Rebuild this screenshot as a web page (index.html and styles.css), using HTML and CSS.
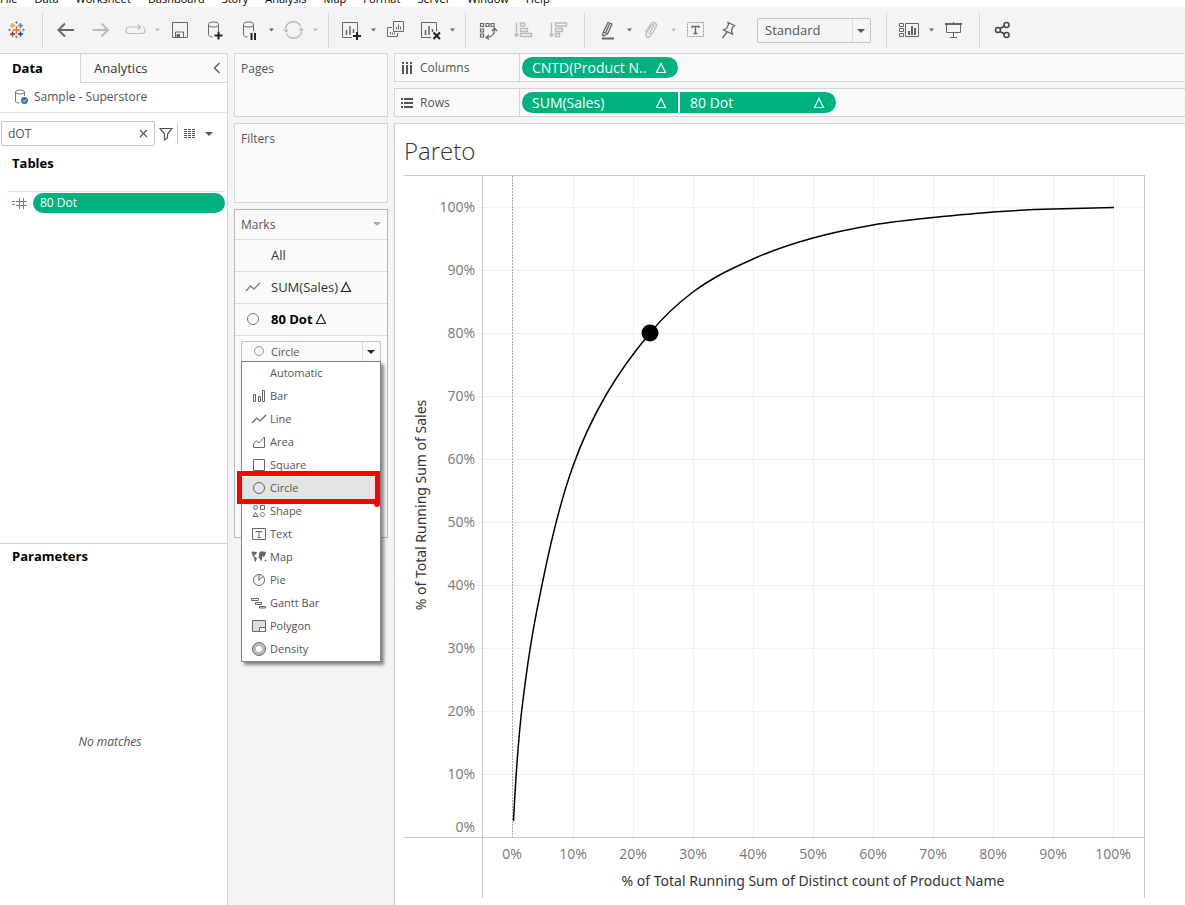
FILE: index.html
```html
<!DOCTYPE html>
<html lang="en">
<head>
    <meta charset="UTF-8">
    <meta name="viewport" content="width=device-width, initial-scale=1.0">
    <title>Pareto</title>
    <link rel="stylesheet" href="styles.css">
</head>
<body>
    <!-- Shared symbols -->
    <svg class="defs" aria-hidden="true">
        <symbol id="caret" viewBox="0 0 9 26"><path d="M2 11.500h5l-2.500 3z" fill="currentColor"/></symbol>
        <symbol id="delta" viewBox="0 0 12 12"><path d="M6 1.500 10.500 10.500H1.500z" fill="none" stroke="currentColor" stroke-width="1.200"/></symbol>
        <symbol id="circle" viewBox="0 0 16 16"><circle cx="8" cy="8" r="5.500" fill="none" stroke="currentColor"/></symbol>
        <symbol id="line" viewBox="0 0 16 16"><path d="M1 12 5.500 7 9 10 15 4" fill="none" stroke="currentColor" stroke-width="1.200"/></symbol>
    </svg>

    <!-- Menu bar -->
    <nav class="menubar">
        <a href="#">File</a>
        <a href="#">Data</a>
        <a href="#">Worksheet</a>
        <a href="#">Dashboard</a>
        <a href="#">Story</a>
        <a href="#">Analysis</a>
        <a href="#">Map</a>
        <a href="#">Format</a>
        <a href="#">Server</a>
        <a href="#">Window</a>
        <a href="#">Help</a>
    </nav>

    <!-- Toolbar -->
    <header class="toolbar">
        <button class="logo" aria-label="Start page">
            <svg viewBox="0 0 25 26" fill="none" stroke-width="1.500">
                <path d="M12.500 9v8M8.500 13h8" stroke="#e8762d"/>
                <path d="M8.500 6v5M6 8.500h5" stroke="#e9a23b"/>
                <path d="M16.500 6v5M14 8.500h5" stroke="#5b879b"/>
                <path d="M8.500 14.500v5M6 17h5" stroke="#c72035"/>
                <path d="M16.500 14.500v5M14 17h5" stroke="#1f447e"/>
                <path d="M12.500 4v3M11 5.500h3M12.500 18.500v3M11 20h3M5.500 11.500v3M4 13h3M19.500 11.500v3M18 13h3" stroke="#7b94ad" stroke-width="1"/>
            </svg>
        </button>
        <span class="sep"></span>
        <button class="tool" aria-label="Undo"><svg viewBox="0 0 25 26"><path d="M21 13H6M12 6.500 5.500 13l6.500 6.500" stroke-width="2"/></svg></button>
        <button class="tool off" aria-label="Redo"><svg viewBox="0 0 25 26"><path d="M4.500 13h15M13.500 6.500 20 13l-6.500 6.500" stroke-width="2"/></svg></button>
        <button class="tool off" aria-label="Replay"><svg viewBox="0 0 25 26"><path d="M17 10H6a3 3 0 0 0-3 3v.500a3 3 0 0 0 3 3h13a3 3 0 0 0 3-3V13a3 3 0 0 0-2-2.800M15 7.500l2.500 2.500-2.500 2.500" stroke-width="1.200"/></svg></button>
        <button class="caret off" aria-label="Replay options"><svg viewBox="0 0 9 26"><use href="#caret"/></svg></button>
        <button class="tool" aria-label="Save"><svg viewBox="0 0 25 26"><path d="M5.500 5.500h15v15h-15zM8.500 20v-5h8v5" /><path d="M9.500 17h3.500v3.500H9.500z" fill="currentColor" stroke="none"/></svg></button>
        <button class="tool" aria-label="New data source"><svg viewBox="0 0 25 26"><path d="M6.500 7.500v10c0 1.500 1.500 2.500 4 2.500M16.500 7.500V14"/><ellipse cx="11.500" cy="7.500" rx="5" ry="2.500"/><path d="M16.500 14.500v8M12.500 18.500h8" stroke="#222" stroke-width="2"/></svg></button>
        <button class="tool" aria-label="Pause updates"><svg viewBox="0 0 25 26"><path d="M6.500 7.500v10c0 1.500 1.500 2.500 4 2.500M16.500 7.500V14"/><ellipse cx="11.500" cy="7.500" rx="5" ry="2.500"/><path d="M14.500 16v7M18 16v7" stroke="#222" stroke-width="2"/></svg></button>
        <button class="caret" aria-label="Pause options"><svg viewBox="0 0 9 26"><use href="#caret"/></svg></button>
        <button class="tool off" aria-label="Refresh"><svg viewBox="0 0 25 26"><path d="M4.500 12a8 8 0 0 1 15-3M20.500 13.500a8 8 0 0 1-15 3.500" stroke-width="1.500"/><path d="M2 12.500h5l-1 3.500zM23 13.500h-5l2-3.500z" fill="currentColor" stroke="none"/></svg></button>
        <button class="caret off" aria-label="Refresh options"><svg viewBox="0 0 9 26"><use href="#caret"/></svg></button>
        <span class="sep"></span>
        <button class="tool" aria-label="New worksheet"><svg viewBox="0 0 25 26"><path d="M13 20.500H3.500v-15h15V15"/><path d="M7.500 13v5M11 9v9M14.500 12v4" stroke-width="1.500"/><path d="M18 15v8M14 19h8" stroke="#222" stroke-width="2"/></svg></button>
        <button class="caret" aria-label="New worksheet options"><svg viewBox="0 0 9 26"><use href="#caret"/></svg></button>
        <button class="tool" aria-label="Duplicate"><svg viewBox="0 0 25 26"><path d="M10.500 4.500h10v10h-10zM9 10.500H4.500v9h10V16M13.500 10v2.500M15.500 7.500v5M17.500 9.500v3M7.500 15v2.500M9.500 15.500v2M11.500 15.500v2"/></svg></button>
        <button class="tool" aria-label="Clear sheet"><svg viewBox="0 0 25 26"><path d="M13 20.500H3.500v-15h15V14"/><path d="M7.500 13v5M11 9v9M14.500 12v3" stroke-width="1.500"/><path d="m15.500 15.500 6.500 6.500M22 15.500 15.500 22" stroke="#222" stroke-width="2"/></svg></button>
        <button class="caret" aria-label="Clear options"><svg viewBox="0 0 9 26"><use href="#caret"/></svg></button>
        <span class="sep"></span>
        <button class="tool" aria-label="Swap rows and columns"><svg viewBox="0 0 25 26"><path d="M4.500 6.500h3v3h-3zM10 6.500h3v3h-3zM15 6.500h3v3h-3zM4.500 12h3v3h-3zM4.500 17h3v3h-3zM18.500 12c0 5-2 8-7.500 8.500M16 14l2.500-3 2.500 3M13 18l-3 2.500 3 2" stroke-width="1.200"/></svg></button>
        <button class="tool off" aria-label="Sort ascending"><svg viewBox="0 0 25 26"><path d="M5.500 5.500v14M3.500 17l2 2.500 2-2.500M9.500 6h4v3h-4zM9.500 11.500h7v3h-7zM9.500 16.500h11v3h-11z" stroke-width="1.400"/></svg></button>
        <button class="tool off" aria-label="Sort descending"><svg viewBox="0 0 25 26"><path d="M5.500 5.500v14M3.500 17l2 2.500 2-2.500M9.500 6h11v3h-11zM9.500 11.500h7v3h-7zM9.500 16.500h4v3h-4z" stroke-width="1.400"/></svg></button>
        <span class="sep"></span>
        <button class="tool" aria-label="Highlight"><svg viewBox="0 0 25 26"><path d="m13 5.500 4 1.500-4.500 10-4 2-1-1 1-3zM15 6l-4.500 10M8.500 15l4 2" stroke-width="1.300"/><path d="M7 21.500h12" stroke-width="2"/></svg></button>
        <button class="caret" aria-label="Highlight options"><svg viewBox="0 0 9 26"><use href="#caret"/></svg></button>
        <button class="tool off" aria-label="Group members"><svg viewBox="0 0 25 26"><path d="m10 17 4.500-7.500c1-1.800-1-3-2-1.200L7.500 16c-2 3.500 2 6 4.200 2.500l5.300-8.500c2-3.500-3-6.500-5.200-3L6.500 15" stroke-width="1.300"/></svg></button>
        <button class="caret off" aria-label="Group options"><svg viewBox="0 0 9 26"><use href="#caret"/></svg></button>
        <button class="tool" aria-label="Show mark labels"><svg viewBox="0 0 25 26"><path d="M4.500 5.500h16v14h-16z" stroke-dasharray="2 1" stroke="#999"/><path d="M9 11V9.500h7V11M12.500 9.500v7M10.500 16.500h4" stroke-width="1.300"/></svg></button>
        <button class="tool" aria-label="Fix axes"><svg viewBox="0 0 25 26"><path d="m10 5.500 6.500 3-1.500 1-1.500 4 1 3.500-9-4 3-1.500 2-4zM9 15l-4.500 6" stroke-width="1.300"/></svg></button>
        <div class="fit">
            <select aria-label="Fit"><option>Standard</option></select>
        </div>
        <span class="sep"></span>
        <button class="tool" aria-label="Show cards"><svg viewBox="0 0 25 26"><path d="M2.500 6.500h4v3h-4zM2.500 11.500h4v3h-4zM2.500 16.500h4v3h-4zM8.500 6.500h13v13h-13z"/><path d="M12 14v4M15 9v9M18 11v7" stroke-width="2"/></svg></button>
        <button class="caret" aria-label="Card options"><svg viewBox="0 0 9 26"><use href="#caret"/></svg></button>
        <button class="tool" aria-label="Presentation mode"><svg viewBox="0 0 25 26"><path d="M4 7h17" stroke-width="2"/><path d="M5.500 8v7.500h14V8M12.500 5v2M12.500 16v4.500M9 20.500h7"/></svg></button>
        <span class="sep"></span>
        <button class="tool" aria-label="Share"><svg viewBox="0 0 25 26"><g stroke="#444" stroke-width="1.500"><circle cx="8" cy="13" r="2.500"/><circle cx="16.500" cy="8" r="2.500"/><circle cx="16.500" cy="18" r="2.500"/><path d="m10 11.500 4.500-2.500M10 14.500l4.500 2.500"/></g></svg></button>
    </header>

    <main class="workspace">
        <!-- Data pane -->
        <aside class="data-pane">
            <div class="tabs">
                <button class="tab active">Data</button>
                <button class="tab">Analytics
                    <svg width="8" height="12" viewBox="0 0 8 12"><path d="M6.500 1 1.500 6l5 5" fill="none" stroke="#555" stroke-width="1.300"/></svg>
                </button>
            </div>
            <div class="source">
                <svg width="16" height="16" viewBox="0 0 16 16" fill="none" stroke="#777"><ellipse cx="6" cy="3" rx="4.500" ry="2"/><path d="M1.500 3v9c0 1.500 1.500 2 4 2M10.500 3v4"/><circle cx="10.500" cy="11.500" r="3.500" fill="#2f7ba3" stroke="none"/><path d="m9 11.500 1.200 1.200 2-2.200" stroke="#fff"/></svg>
                Sample - Superstore
            </div>
            <div class="fields">
                <div class="search">
                    <div class="search-box">
                        <input type="text" value="dOT" aria-label="Search fields">
                        <button aria-label="Clear search"><svg width="9" height="9" viewBox="0 0 9 9"><path d="m1 1 7 7M8 1 1 8" stroke="#555" stroke-width="1.200"/></svg></button>
                    </div>
                    <button aria-label="Filter fields"><svg width="14" height="14" viewBox="0 0 14 14"><path d="M1 1.500h12L8.500 7v4l-3 2V7z" fill="none" stroke="#555" stroke-width="1.200"/></svg></button>
                    <button class="view-as" aria-label="View fields as">
                        <svg width="32" height="12" viewBox="0 0 32 12"><path d="M1 1.500h12M1 3.500h12M1 5.500h12M1 7.500h12M1 9.500h12" stroke="#555" stroke-dasharray="3 1"/><path d="M22 4h8l-4 4z" fill="#555"/></svg>
                    </button>
                </div>
                <h2>Tables</h2>
                <div class="field">
                    <svg width="15" height="12" viewBox="0 0 15 12"><path d="M0 4.500h3M0 7.500h3M4 4.500h11M4 8.500h11M7.500 1v11M11.500 1v11" stroke="#3f9d72"/></svg>
                    <span class="pill">80 Dot</span>
                </div>
            </div>
            <div class="parameters">
                <h2>Parameters</h2>
                <p>No matches</p>
            </div>
        </aside>

        <!-- Cards -->
        <section class="cards">
            <div class="card pages">Pages</div>
            <div class="card filters">Filters</div>
            <div class="card marks">
                <div class="marks-head">Marks <svg width="8" height="6" viewBox="0 0 8 6"><path d="M0 0h8L4 4z" fill="#aaa"/></svg></div>
                <div class="layer"><span class="layer-icon"></span>All</div>
                <div class="layer"><svg class="layer-icon" viewBox="0 0 16 16"><use href="#line"/></svg>SUM(Sales)<svg class="delta"><use href="#delta"/></svg></div>
                <div class="layer current"><svg class="layer-icon" viewBox="0 0 16 16"><use href="#circle"/></svg>80 Dot<svg class="delta"><use href="#delta"/></svg></div>
                <div class="mark-type">
                    <select aria-label="Mark type"><option>Circle</option></select>
                    <svg class="type-icon" viewBox="0 0 16 16"><circle cx="8" cy="8" r="4.500" fill="none" stroke="#999"/></svg>
                    <ul class="type-menu">
                        <li><svg viewBox="0 0 16 16"></svg>Automatic</li>
                        <li><svg viewBox="0 0 16 16"><path d="M2.500 6.500h2v7h-2zM7.500 8.500h2v5h-2zM11.500 2.500h2v11h-2z"/></svg>Bar</li>
                        <li><svg viewBox="0 0 16 16"><use href="#line"/></svg>Line</li>
                        <li><svg viewBox="0 0 16 16"><path d="M2.500 13.500v-4l3-2.500 2.500 2 5.500-6v10.500z"/></svg>Area</li>
                        <li><svg viewBox="0 0 16 16"><path d="M2.500 2.500h11v11h-11z"/></svg>Square</li>
                        <li class="picked"><svg viewBox="0 0 16 16"><use href="#circle"/></svg>Circle</li>
                        <li><svg viewBox="0 0 16 16"><circle cx="4.500" cy="4.500" r="2"/><path d="M9.500 2.500h4v4h-4zM4.500 9.500l2.500 4H2zM11.500 9l2.500 2.500-2.500 2.500L9 11.500z"/></svg>Shape</li>
                        <li><svg viewBox="0 0 16 16"><path d="M1.500 2.500h13v11h-13zM5 6.500v-1h6v1M8 5.500v6M6.500 11.500h3"/></svg>Text</li>
                        <li><svg viewBox="0 0 16 16"><path d="M0 3l2-.5 4 .5-.5 1.500L4 6 3 7l2 1.500 1 1-1 2-1 2-.7-3L3 8.500 1.500 6.500 1.200 4zM8 5l.7-2 2-.8L15 3l-.5 2.500-1 1.500-.7 1.200-1-1.200-.8.500.4 2-1.400 3-1-2.500L7.500 8.500 8 6.500zM14 10.500l1.500.5-.5 1.500-1.500-.5z" fill="#666" stroke="none"/></svg>Map</li>
                        <li><svg viewBox="0 0 16 16"><circle cx="8" cy="8" r="5.500"/><path d="M8 2.500V8l4-3.500M8 8h-1"/></svg>Pie</li>
                        <li><svg viewBox="0 0 16 16"><path d="M.500 3.500h7v2h-7zM4.500 7.500h6v2h-6zM8.500 11.500h6v1.500h-6z"/></svg>Gantt Bar</li>
                        <li><svg viewBox="0 0 16 16"><path d="M1.500 2.500h13v11h-13z" fill="#ddd"/><path d="M8.500 9.500h6v4h-6z" fill="#fff"/></svg>Polygon</li>
                        <li><svg viewBox="0 0 16 16"><circle cx="8" cy="8" r="6.500" fill="#bbb"/><circle cx="8" cy="8" r="3" fill="#fff" stroke="none"/></svg>Density</li>
                    </ul>
                    <svg class="red-box" viewBox="0 0 143 37"><path d="M2.500 2.500h138v28H2.500zM140 30v3" fill="none" stroke="#f00" stroke-width="5"/><circle cx="140" cy="33" r="3" fill="#f00"/></svg>
                </div>
            </div>
        </section>

        <!-- Shelves and view -->
        <section class="sheet">
            <div class="shelf">
                <div class="shelf-name"><svg width="12" height="12" viewBox="0 0 12 12"><path d="M2 0v2M6 0v2M10 0v2M2 3v9M6 3v9M10 3v9" stroke="#555" stroke-width="2"/></svg>Columns</div>
                <div class="pills"><span class="pill">CNTD(Product N..<svg class="delta"><use href="#delta"/></svg></span></div>
            </div>
            <div class="shelf">
                <div class="shelf-name"><svg width="12" height="12" viewBox="0 0 12 12"><path d="M0 2h2M0 6h2M0 10h2M3 2h9M3 6h9M3 10h9" stroke="#555" stroke-width="2"/></svg>Rows</div>
                <div class="pills">
                    <span class="pill first">SUM(Sales)<svg class="delta"><use href="#delta"/></svg></span>
                    <span class="pill last">80 Dot<svg class="delta"><use href="#delta"/></svg></span>
                </div>
            </div>
            <div class="view">
                <h1>Pareto</h1>
                <svg class="chart" width="741" height="723" viewBox="0 0 741 723">
                    <g class="grid">
                        <path d="M73 32.500h667M73 95.500h667M73 158.500h667M73 221.500h667M73 284.500h667M73 347.500h667M73 410.500h667M73 473.500h667M73 536.500h667M73 599.500h667"/>
                        <path d="M169.500 1v666M229.500 1v666M289.500 1v666M349.500 1v666M409.500 1v666M469.500 1v666M529.500 1v666M589.500 1v666M649.500 1v666M709.500 1v666"/>
                    </g>
                    <path class="zero" d="M108.500 1v661"/>
                    <path class="frame" d="M0 .500h741M0 662.500h741M78.500 0v723M740.500 0v723"/>
                    <path class="curve" d="M109.500 646C112 596 115 556 119 525C126 468 132 439 139 405C149 356 159 319 169 291C180 260 191 239 202 220C217 194 231 176 246 158C260 141 275 127.500 289 117C309 102 329 93 349 84C369 75 389 68.500 409 63C429 57.500 449 53.500 469 50C489 46.500 509 44.500 529 42.500C549 40.500 569 38.500 589 37C609 35.500 629 34.500 649 34C669 33.500 689 33 710 32.500"/>
                    <circle cx="246" cy="158" r="8.500"/>
                    <g class="ticks y">
                        <text x="71" y="37">100%</text>
                        <text x="71" y="100">90%</text>
                        <text x="71" y="163">80%</text>
                        <text x="71" y="226">70%</text>
                        <text x="71" y="289">60%</text>
                        <text x="71" y="352">50%</text>
                        <text x="71" y="415">40%</text>
                        <text x="71" y="478">30%</text>
                        <text x="71" y="541">20%</text>
                        <text x="71" y="604">10%</text>
                        <text x="71" y="657">0%</text>
                    </g>
                    <g class="ticks x">
                        <text x="108" y="684">0%</text>
                        <text x="169" y="684">10%</text>
                        <text x="229" y="684">20%</text>
                        <text x="289" y="684">30%</text>
                        <text x="349" y="684">40%</text>
                        <text x="409" y="684">50%</text>
                        <text x="469" y="684">60%</text>
                        <text x="529" y="684">70%</text>
                        <text x="589" y="684">80%</text>
                        <text x="649" y="684">90%</text>
                        <text x="709" y="684">100%</text>
                    </g>
                    <text class="axis-title" x="409" y="711">% of Total Running Sum of Distinct count of Product Name</text>
                    <text class="axis-title" transform="translate(22 330) rotate(-90)">% of Total Running Sum of Sales</text>
                </svg>
            </div>
        </section>
    </main>
</body>
</html>
```
FILE: styles.css
```css
* {
    box-sizing: border-box;
}

body {
    margin: 0;
    min-height: 100vh;
    display: flex;
    flex-direction: column;
    background: #f4f4f4;
    font-family: "Open Sans", "Noto Sans", sans-serif;
    font-size: 12px;
    line-height: 16px;
    color: #555;
}

button {
    border: none;
    padding: 0;
    background: none;
    font: inherit;
    color: inherit;
}

h1, h2, p, ul {
    margin: 0;
    padding: 0;
}

.defs {
    display: none;
}

/* Menu bar */
.menubar {
    display: flex;
    align-items: flex-end;
    gap: 17px;
    height: 7px;
    overflow: hidden;
    background: #fff;
    font-size: 11px;
}

.menubar a {
    color: #000;
    text-decoration: none;
}

/* Toolbar */
.toolbar {
    display: flex;
    align-items: center;
    height: 46px;
    color: #666;
}

.logo {
    width: 33px;
    height: 26px;
    margin-right: 1px;
}

.toolbar svg {
    display: block;
    width: 25px;
    height: 26px;
    margin: 0 auto;
}

.tool {
    width: 35px;
}

.tool svg {
    fill: none;
    stroke: currentColor;
}

.caret, .toolbar .caret svg {
    width: 9px;
}

.off {
    color: #bbb;
}

.sep {
    width: 1px;
    height: 35px;
    margin: 0 5px 0 8px;
    background: #d4d4d4;
}

.fit {
    position: relative;
    width: 114px;
    margin: 0 7px 0 9px;
}

select {
    display: block;
    width: 100%;
    appearance: none;
    border: 1px solid #c4c4c4;
    border-radius: 2px;
    background: #f5f5f5;
    font: inherit;
    color: #555;
}

.fit select {
    height: 25px;
    padding: 0 7px;
    font-size: 13px;
}

.fit::before, .mark-type::before {
    content: "";
    position: absolute;
    top: 1px;
    bottom: 1px;
    right: 18px;
    border-left: 1px solid #ddd;
}

.fit::after, .mark-type::after {
    content: "";
    position: absolute;
    top: 11px;
    right: 6px;
    border: 4px solid transparent;
    border-top-color: #555;
    border-bottom: none;
}

/* Workspace */
.workspace {
    flex: 1;
    display: flex;
}

/* Data pane */
.data-pane {
    width: 228px;
    display: flex;
    flex-direction: column;
    background: #fff;
    border-top: 1px solid #d4d4d4;
    border-right: 1px solid #d4d4d4;
}

.tabs {
    display: flex;
    height: 29px;
    font-size: 13px;
}

.tab {
    flex: 1;
    display: flex;
    align-items: center;
    justify-content: space-between;
    padding: 0 6px 0 13px;
    background: #fafafa;
    border-left: 1px solid #d4d4d4;
    border-bottom: 1px solid #d4d4d4;
    color: #333;
}

.tab.active {
    flex: 0 0 80px;
    padding: 0 0 2px 12px;
    background: #fff;
    border: none;
    font-weight: bold;
    color: #000;
}

.source {
    display: flex;
    align-items: center;
    gap: 4px;
    height: 30px;
    padding: 0 0 1px 14px;
    border-bottom: 1px solid #e4e4e4;
}

.fields {
    flex: 7 0 0;
    padding: 8px 0 0 1px;
}

.search {
    display: flex;
    align-items: center;
    gap: 4px;
}

.search svg {
    display: block;
}

.search-box {
    width: 154px;
    height: 25px;
    display: flex;
    align-items: center;
    padding-right: 6px;
    border: 1px solid #c4c4c4;
    border-radius: 2px;
}

.search-box input {
    flex: 1;
    min-width: 0;
    padding: 0 6px;
    border: none;
    background: none;
    font: inherit;
    color: #555;
}

.view-as {
    padding: 4px 0 4px 5px;
    border-left: 1px solid #ccc;
}

h2 {
    font-size: 13px;
    line-height: 24px;
    padding-left: 11px;
    color: #000;
}

.fields h2 {
    margin-top: 5px;
}

.field {
    display: flex;
    align-items: center;
    gap: 6px;
    margin: 16px 2px 0 7px;
    padding: 1px 0 0 4px;
    border-top: 1px solid #e0e0e0;
}

.pill {
    display: flex;
    align-items: center;
    justify-content: space-between;
    background: #00b180;
    color: #fff;
}

.field .pill {
    flex: 1;
    height: 20px;
    padding: 0 7px;
    border-radius: 10px;
}

.parameters {
    flex: 6 0 0;
    display: flex;
    flex-direction: column;
    border-top: 1px solid #d4d4d4;
}

.parameters h2 {
    padding-left: 12px;
}

.parameters p {
    margin: auto;
    padding: 12px 7px 0 0;
    font-style: italic;
}

/* Cards */
.cards {
    width: 166px;
    padding: 0 6px;
    display: flex;
    flex-direction: column;
    gap: 6px;
}

.card {
    background: #fafafa;
    border: 1px solid #d4d4d4;
    padding: 7px 6px;
}

.pages {
    height: 64px;
}

.filters {
    height: 80px;
}

.marks {
    height: 329px;
    padding: 0;
    border-color: #b4b4b4;
}

.marks-head {
    display: flex;
    align-items: center;
    justify-content: space-between;
    height: 29px;
    padding: 0 6px;
}

.layer {
    display: flex;
    align-items: center;
    height: 32px;
    padding: 0 0 2px 10px;
    border-top: 1px solid #dcdcdc;
    font-size: 13px;
    color: #333;
}

.layer.current {
    font-weight: bold;
    color: #000;
}

.layer-icon {
    width: 16px;
    height: 16px;
    margin-right: 10px;
    color: #777;
}

.delta {
    width: 12px;
    height: 12px;
    margin-left: 2px;
    color: #222;
}

.pill .delta {
    margin: 0;
    color: #fff;
}

.mark-type {
    position: relative;
    padding: 5px 6px;
    border-top: 1px solid #dcdcdc;
    font-size: 11px;
}

.mark-type select {
    height: 21px;
    padding: 0 29px;
    background: #fafafa;
}

.mark-type::before {
    top: 6px;
    bottom: 6px;
    right: 24px;
}

.mark-type::after {
    top: 14px;
    right: 12px;
    border-top-color: #222;
}

.type-icon {
    position: absolute;
    left: 16px;
    top: 7px;
    width: 16px;
    height: 16px;
}

/* Open list of mark types */
.type-menu {
    position: absolute;
    left: 6px;
    right: 6px;
    top: 25px;
    background: #fff;
    border: 1px solid #7f8289;
    box-shadow: 3px 3px 3px rgba(0, 0, 0, 0.45);
    list-style: none;
}

.type-menu li {
    display: flex;
    align-items: center;
    gap: 3px;
    height: 23px;
    padding: 0 0 1px 9px;
}

.type-menu svg {
    width: 16px;
    height: 16px;
    fill: none;
    stroke: #666;
    color: #666;
}

.type-menu .picked {
    background: #e4e4e4;
}

.red-box {
    position: absolute;
    left: 2px;
    top: 135px;
    width: 143px;
    height: 37px;
}

/* Shelves */
.sheet {
    flex: 1;
    min-width: 0;
    display: flex;
    flex-direction: column;
    gap: 6px;
}

.shelf {
    display: flex;
    height: 29px;
    background: #fafafa;
    border: 1px solid #d4d4d4;
    border-right: none;
}

.shelf-name {
    width: 125px;
    display: flex;
    align-items: center;
    gap: 7px;
    padding-left: 6px;
    border-right: 1px solid #d4d4d4;
}

.pills {
    display: flex;
    align-items: center;
    gap: 2px;
    padding-left: 2px;
}

.pills .pill {
    width: 156px;
    height: 21px;
    padding: 0 11px 0 10px;
    border-radius: 11px;
    font-size: 14px;
}

.pills .first {
    border-radius: 11px 0 0 11px;
}

.pills .last {
    border-radius: 0 11px 11px 0;
}

/* View */
.view {
    flex: 1;
    padding: 10px 9px 0;
    background: #fff;
    border-top: 1px solid #d4d4d4;
    border-left: 1px solid #d4d4d4;
}

h1 {
    font-size: 24px;
    font-weight: 300;
    line-height: 34px;
    color: #333;
}

.chart {
    display: block;
    margin-top: 7px;
}

.grid {
    stroke: #f0f0f0;
}

.zero {
    stroke: #aaa;
    stroke-dasharray: 2 1;
}

.frame {
    stroke: #c8c8c8;
}

.curve {
    fill: none;
    stroke: #000;
    stroke-width: 1.5;
}

.ticks {
    font-size: 14px;
    fill: #777;
}

.ticks.y {
    text-anchor: end;
}

.ticks.x, .axis-title {
    text-anchor: middle;
}

.axis-title {
    font-family: "Noto Sans", sans-serif;
    font-size: 14px;
    fill: #333;
}
```
